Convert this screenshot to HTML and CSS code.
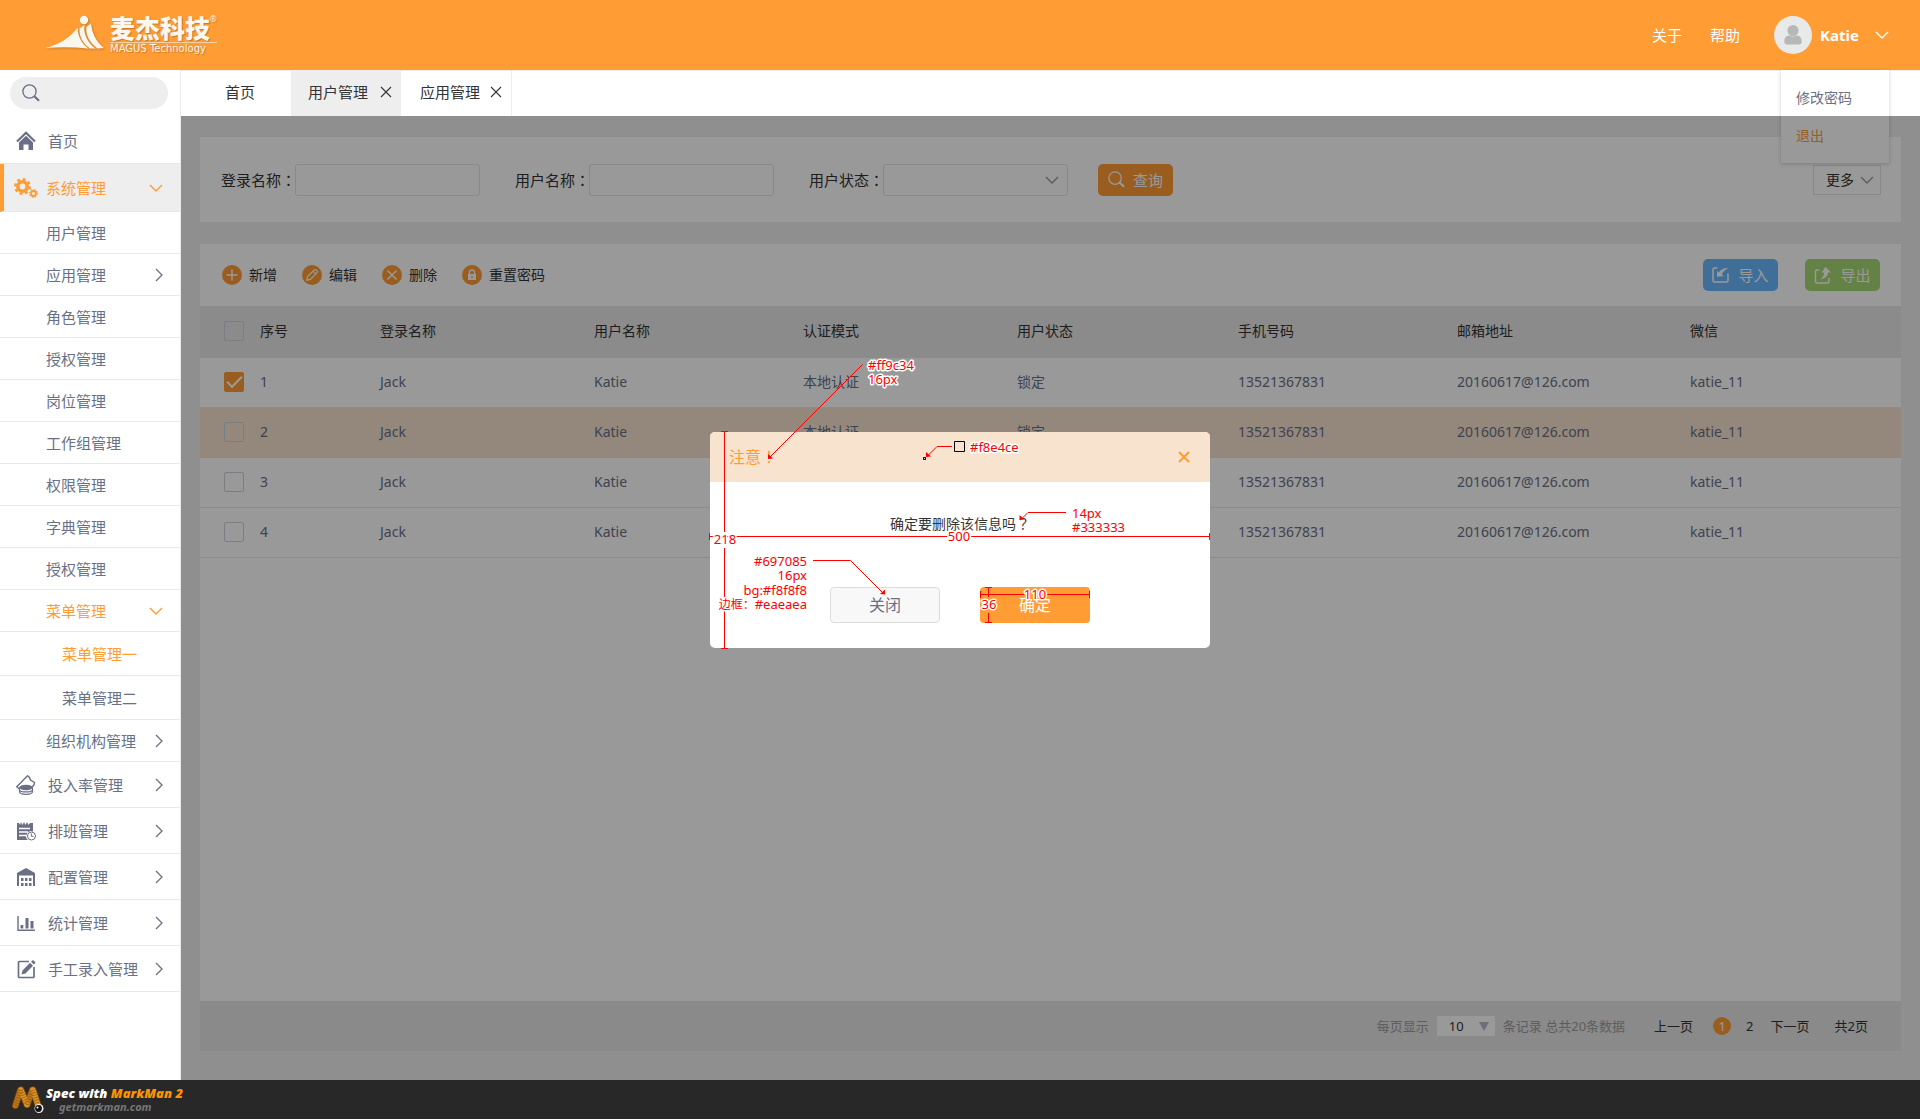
FILE: index.html
```html
<!DOCTYPE html>
<html lang="zh-CN">
<head>
<meta charset="utf-8">
<meta name="viewport" content="width=device-width, initial-scale=1">
<title>用户管理</title>
<link rel="stylesheet" href="styles.css">
</head>
<body>
<svg class="sprite" aria-hidden="true">
  <symbol id="i-right" viewBox="0 0 8 14"><path d="M1 1l6 6-6 6" fill="none" stroke="currentColor" stroke-width="1.3"/></symbol>
  <symbol id="i-down" viewBox="0 0 14 8"><path d="M1 1l6 6 6-6" fill="none" stroke="currentColor" stroke-width="1.4"/></symbol>
  <symbol id="i-x" viewBox="0 0 12 12"><path d="M1 1l10 10M11 1L1 11" fill="none" stroke="currentColor" stroke-width="1.1"/></symbol>
  <symbol id="i-search" viewBox="0 0 18 18"><circle cx="7.5" cy="7.5" r="6.6" fill="none" stroke="currentColor" stroke-width="1.3"/><path d="M12.3 12.3l4.7 4.5" stroke="currentColor" stroke-width="2.2"/></symbol>
</svg>

<div class="app">
  <header class="topbar">
    <a class="brand" href="#">
      <svg class="brand-mark" width="60" height="36" viewBox="0 0 60 36" aria-hidden="true">
        <circle cx="39" cy="5" r="4.2"/>
        <path d="M0 33C14 30 26 22 32.500 12.500C33 20 35.500 28 43.500 33.500Q22 31.500 0 33z"/>
        <path d="M39.500 10C38 17 42 28 50.500 33.500L45 33.500C37 28 34 20 34.500 13.500z"/>
        <path d="M46 8.500C47 18 51 27 59 33L52.500 33.500C44 27 40.500 19 41.500 12z"/>
      </svg>
      <span class="brand-text">
        <span class="brand-name">麦杰科技<sup>®</sup></span>
        <span class="brand-sub">MAGUS Technology</span>
      </span>
    </a>
    <nav class="topnav">
      <a href="#">关于</a>
      <a href="#">帮助</a>
      <div class="user">
        <button class="user-btn" type="button">
          <svg width="38" height="38" viewBox="0 0 38 38" aria-hidden="true"><circle cx="19" cy="19" r="19" fill="#e8eaea"/><circle cx="19" cy="14.500" r="5.500" fill="#b6b8b8"/><path d="M15 19.500h1q3 2 6 0h1c3.500.5 4.700 3 4.700 6 0 2-1 3-3 3H13.300c-2 0-3-1-3-3 0-3 1.200-5.500 4.700-6z" fill="#b6b8b8"/></svg>
          <span>Katie</span>
          <svg class="user-caret" width="14" height="8"><use href="#i-down"/></svg>
        </button>
        <div class="user-menu">
          <a href="#">修改密码</a>
          <a class="hot" href="#">退出</a>
        </div>
      </div>
    </nav>
  </header>

  <div class="body">
    <aside class="sidebar">
      <form class="side-search">
        <svg width="18" height="18"><use href="#i-search"/></svg>
        <input type="search" aria-label="搜索">
      </form>
      <nav class="menu">
        <a class="item" href="#">
          <svg width="20" height="20" viewBox="0 0 20 20"><path d="M1 10.500l9-8.700 9 8.700" fill="none" stroke="currentColor" stroke-width="2.200"/><path d="M3 11.500l7-6.700 7 6.700V19h-4.500v-5.500h-5V19H3z" fill="currentColor"/></svg>
          <span>首页</span></a>
        <a class="item active" href="#">
          <svg width="24" height="20" viewBox="0 0 24 20"><circle cx="8.500" cy="8.500" r="4.700" fill="none" stroke="currentColor" stroke-width="3.600"/><circle cx="8.500" cy="8.500" r="7.300" fill="none" stroke="currentColor" stroke-width="2.400" stroke-dasharray="3 2.730"/><circle cx="19.500" cy="15.500" r="2.500" fill="none" stroke="currentColor" stroke-width="1.800"/><circle cx="19.500" cy="15.500" r="3.800" fill="none" stroke="currentColor" stroke-width="1.300" stroke-dasharray="1.600 1.380"/></svg>
          <span>系统管理</span><svg class="caret" width="14" height="8"><use href="#i-down"/></svg></a>
        <a class="item sub" href="#"><span>用户管理</span></a>
        <a class="item sub" href="#"><span>应用管理</span><svg class="caret" width="8" height="14"><use href="#i-right"/></svg></a>
        <a class="item sub" href="#"><span>角色管理</span></a>
        <a class="item sub" href="#"><span>授权管理</span></a>
        <a class="item sub" href="#"><span>岗位管理</span></a>
        <a class="item sub" href="#"><span>工作组管理</span></a>
        <a class="item sub" href="#"><span>权限管理</span></a>
        <a class="item sub" href="#"><span>字典管理</span></a>
        <a class="item sub" href="#"><span>授权管理</span></a>
        <a class="item sub hot" href="#"><span>菜单管理</span><svg class="caret" width="14" height="8"><use href="#i-down"/></svg></a>
        <a class="item leaf hot" href="#"><span>菜单管理一</span></a>
        <a class="item leaf" href="#"><span>菜单管理二</span></a>
        <a class="item sub" href="#"><span>组织机构管理</span><svg class="caret" width="8" height="14"><use href="#i-right"/></svg></a>
        <a class="item" href="#">
          <svg width="20" height="20" viewBox="0 0 20 20"><path d="M3.500 14L.8 11.800 11.500.8l2 1.700 1 2.500 4 2.500-.3 2L16 12.500" fill="none" stroke="currentColor" stroke-width="1.400"/><ellipse cx="10" cy="12.500" rx="6.500" ry="2.700" fill="currentColor"/><path d="M3.500 12.500V16.500C3.500 20.300 16.500 20.300 16.500 16.500V12.500M3.500 14.500c0 3.300 13 3.300 13 0" fill="none" stroke="currentColor" stroke-width="1.200"/></svg>
          <span>投入率管理</span><svg class="caret" width="8" height="14"><use href="#i-right"/></svg></a>
        <a class="item" href="#">
          <svg width="20" height="20" viewBox="0 0 20 20"><path d="M1 2h2l1 2 1-3 1.500 3L8 1l1.500 3L11 1l1.500 3L14 2h3v8.500a5 5 0 0 0-5 8.500H1z" fill="currentColor"/><path d="M3 7.500h11M3 11h9M3 14.500h7" stroke="#fff" stroke-width="1.300"/><circle cx="15.500" cy="15" r="4" fill="#fff" stroke="currentColor" stroke-width="1"/><path d="M15.300 12.300v3h2.200" fill="none" stroke="currentColor" stroke-width="1"/></svg>
          <span>排班管理</span><svg class="caret" width="8" height="14"><use href="#i-right"/></svg></a>
        <a class="item" href="#">
          <svg width="20" height="20" viewBox="0 0 20 20"><path d="M1 6l9-5 9 5v13h-2V8.500H3V19H1z" fill="currentColor"/><path d="M5 11h2.500v3H5zM9 11h2.500v3H9zM13 11h2.500v3H13zM5 16h2.500v3H5zM9 16h2.500v3H9zM13 16h2.500v3H13z" fill="currentColor"/></svg>
          <span>配置管理</span><svg class="caret" width="8" height="14"><use href="#i-right"/></svg></a>
        <a class="item" href="#">
          <svg width="20" height="20" viewBox="0 0 20 20"><path d="M2 3v14.200h17" fill="none" stroke="currentColor" stroke-width="1.400"/><path d="M4.500 12h2.800v3.500H4.500zM9.500 5h3v10.500h-3zM14.500 8h3v7.500h-3z" fill="currentColor"/></svg>
          <span>统计管理</span><svg class="caret" width="8" height="14"><use href="#i-right"/></svg></a>
        <a class="item" href="#">
          <svg width="20" height="20" viewBox="0 0 20 20"><path d="M13 2.500H3.200q-.7 0-.7.700v14.600q0 .7.700.7h14.100q.7 0 .7-.7V8" fill="none" stroke="currentColor" stroke-width="1.700"/><path d="M5.500 15.500l1-4L14 3.800 17 6.800 9.500 14.500zM15 2.800L16.300 1.500q.7-.7 1.400 0l1.400 1.400q.7.700 0 1.300L17.900 5.600z" fill="currentColor"/></svg>
          <span>手工录入管理</span><svg class="caret" width="8" height="14"><use href="#i-right"/></svg></a>
      </nav>
    </aside>

    <main class="main">
      <nav class="tabs">
        <div class="tab home"><a href="#">首页</a></div>
        <div class="tab current"><a href="#">用户管理</a><button type="button" aria-label="关闭用户管理"><svg width="12" height="12"><use href="#i-x"/></svg></button></div>
        <div class="tab last"><a href="#">应用管理</a><button type="button" aria-label="关闭应用管理"><svg width="12" height="12"><use href="#i-x"/></svg></button></div>
      </nav>

      <div class="content">
        <form class="filters">
          <div class="field"><label for="f-login">登录名称<span class="mid" lang="zh-TW">：</span></label><input id="f-login" type="text"></div>
          <div class="field"><label for="f-user">用户名称<span class="mid" lang="zh-TW">：</span></label><input id="f-user" type="text"></div>
          <div class="field"><label for="f-state">用户状态<span class="mid" lang="zh-TW">：</span></label>
            <span class="select"><select id="f-state"><option></option><option>锁定</option></select><svg width="14" height="8"><use href="#i-down"/></svg></span></div>
          <button class="btn query" type="button"><svg width="17" height="17"><use href="#i-search"/></svg>查询</button>
          <button class="more" type="button">更多<svg width="14" height="8"><use href="#i-down"/></svg></button>
        </form>

        <section class="panel">
          <div class="toolbar">
            <button class="tool" type="button"><svg width="20" height="20" viewBox="0 0 20 20"><circle cx="10" cy="10" r="10" fill="#ff9c34"/><path d="M10 4.500v11M4.500 10h11" stroke="#fff" stroke-width="1.500"/></svg>新增</button>
            <button class="tool" type="button"><svg width="20" height="20" viewBox="0 0 20 20"><circle cx="10" cy="10" r="10" fill="#ff9c34"/><path d="M4.800 15.200l.8-3.600 6.600-6.600q1.100-.9 2.200.1l.6.600q.8 1 0 2L8.400 14.400zM11 6.200l2.800 2.800" fill="none" stroke="#fff" stroke-width="1.200"/></svg>编辑</button>
            <button class="tool" type="button"><svg width="20" height="20" viewBox="0 0 20 20"><circle cx="10" cy="10" r="10" fill="#ff9c34"/><path d="M5.500 5.500l9 9M14.500 5.500l-9 9" stroke="#fff" stroke-width="1.500"/></svg>删除</button>
            <button class="tool" type="button"><svg width="20" height="20" viewBox="0 0 20 20"><circle cx="10" cy="10" r="10" fill="#ff9c34"/><path d="M7.500 9.500V7.500a2.500 2.500 0 0 1 5 0v2" fill="none" stroke="#fff" stroke-width="1.400"/><rect x="6" y="9" width="8" height="6" fill="#fff"/><path d="M10 11v2" stroke="#ff9c34" stroke-width="1.200"/></svg>重置密码</button>
            <div class="transfer">
              <button class="btn import" type="button"><svg width="18" height="18" viewBox="0 0 18 18"><path d="M5.500 2H2.500Q1 2 1 3.500v11Q1 16 2.500 16h12q1.500 0 1.500-1.500V7.500" fill="none" stroke="currentColor" stroke-width="1.500"/><path d="M5 5l1.800 1.500Q10 1.500 16.500 2 11.500 4 9.700 8.500L12 10l-7 .8z" fill="currentColor"/></svg>导入</button>
              <button class="btn export" type="button"><svg width="18" height="18" viewBox="0 0 18 18"><path d="M5.500 4H3Q1.500 4 1.500 5.500v10Q1.500 17 3 17h10.500q1.500 0 1.500-1.500V12" fill="none" stroke="currentColor" stroke-width="1.500"/><path d="M11.500.8L17 6.500h-3Q14 12 6 13.500 10 11 10 6.500H7.500z" fill="currentColor"/></svg>导出</button>
            </div>
          </div>

          <table class="grid">
            <colgroup><col class="c-check"><col class="c-no"><col class="c-login"><col class="c-user"><col class="c-auth"><col class="c-state"><col class="c-phone"><col class="c-mail"><col class="c-wx"></colgroup>
            <thead><tr><th><input type="checkbox" aria-label="全选"></th><th>序号</th><th>登录名称</th><th>用户名称</th><th>认证模式</th><th>用户状态</th><th>手机号码</th><th>邮箱地址</th><th>微信</th></tr></thead>
            <tbody>
              <tr><td><input type="checkbox" checked aria-label="选择 1"></td><td>1</td><td>Jack</td><td>Katie</td><td>本地认证</td><td>锁定</td><td>13521367831</td><td>20160617@126.com</td><td>katie_11</td></tr>
              <tr class="hover"><td><input type="checkbox" aria-label="选择 2"></td><td>2</td><td>Jack</td><td>Katie</td><td>本地认证</td><td>锁定</td><td>13521367831</td><td>20160617@126.com</td><td>katie_11</td></tr>
              <tr><td><input type="checkbox" aria-label="选择 3"></td><td>3</td><td>Jack</td><td>Katie</td><td>本地认证</td><td>锁定</td><td>13521367831</td><td>20160617@126.com</td><td>katie_11</td></tr>
              <tr><td><input type="checkbox" aria-label="选择 4"></td><td>4</td><td>Jack</td><td>Katie</td><td>本地认证</td><td>锁定</td><td>13521367831</td><td>20160617@126.com</td><td>katie_11</td></tr>
            </tbody>
          </table>

          <div class="pager">
            <div class="page-size">
              <label for="size">每页显示</label>
              <span class="select"><select id="size"><option>10</option><option>20</option></select><svg width="10" height="9" viewBox="0 0 10 9"><path d="M0 0h10L5 9z" fill="currentColor"/></svg></span>
              <span>条记录 总共20条数据</span>
            </div>
            <a class="prev" href="#">上一页</a>
            <a class="page" href="#">1</a>
            <a class="num" href="#">2</a>
            <a class="next" href="#">下一页</a>
            <span>共2页</span>
          </div>
        </section>
        <div class="mask"></div>
      </div>
    </main>
  </div>

  <div class="dialog-layer">
    <div class="dialog" role="dialog" aria-labelledby="dlg-title">
      <div class="dialog-head"><h2 id="dlg-title">注意<span class="mid" lang="zh-TW">！</span></h2><button type="button" aria-label="关闭"><svg width="12" height="12" viewBox="0 0 12 12"><path d="M1 1l10 10M11 1L1 11" stroke="currentColor" stroke-width="2"/></svg></button></div>
      <p>确定要删除该信息吗<span class="mid" lang="zh-TW">？</span></p>
      <div class="dialog-actions"><button class="cancel" type="button">关闭</button><button class="ok" type="button">确定</button></div>
      <svg class="notes" viewBox="710 432 500 216">
        <g class="lines">
          <path d="M862.500 364.500L770 457M724.500 431.500V532M724.500 548V648.500M721 431.500h7M721 648.500h7"/>
          <path d="M709.500 536.500H947M971 536.500H1209.500M709.500 533v7M1209.500 533v7"/>
          <path d="M952 446.500H937L928 455.500M1066 512.500H1028L1022 518.500M813 560.500H850.500L883 593"/>
          <path d="M980.500 594.500H1024M1046 594.500H1089.500M980.500 591v7M1089.500 591v7M988.500 587.500V597M988.500 613V622.500M985 587.500h7M985 622.500h7"/>
        </g>
        <path class="heads" d="M768 459v-5l5 4.500zM926 457v-5l5 4.500zM1019.500 520v-5l5 4.500zM885 594.500v-5l-5 4.500z"/>
        <path class="swatch" d="M954.500 441.500h10v10h-10zM923.500 457.500h2v2h-2z"/>
        <text x="868" y="370">#ff9c34</text><text x="868" y="384">16px</text>
        <text x="970" y="452">#f8e4ce</text>
        <text x="1072" y="518">14px</text><text x="1072" y="532">#333333</text>
        <g text-anchor="end"><text x="807" y="566">#697085</text><text x="807" y="580">16px</text><text x="807" y="595">bg:#f8f8f8</text><text x="807" y="609"><tspan class="small">边框：</tspan>#eaeaea</text></g>
        <g text-anchor="middle"><text x="725" y="544">218</text><text x="959" y="541">500</text><text x="1035" y="599">110</text><text x="989" y="609">36</text></g>
      </svg>
    </div>
  </div>
</div>

<footer class="credit">
  <svg width="32" height="30" viewBox="0 0 32 30" aria-hidden="true">
    <g fill="none" stroke-linecap="round"><path d="M3.500 20.500L8.500 5M9 5l6 14.500M15 19.500L20.500 5M21 5l6 18" stroke="#7a450c" stroke-width="7"/><path d="M3.500 20.500L8.500 5M15 19.500L20.500 5" stroke="#b8741a" stroke-width="5.500"/><path d="M9 5l6 14.500M21 5l6 18" stroke="#dc9224" stroke-width="5.500"/><path d="M3.500 20.500L8.500 5M9 5l6 14.500M15 19.500L20.500 5M21 5l6 18" stroke="#8f540f" stroke-width="5" stroke-linecap="butt" stroke-dasharray=".6 2"/></g>
    <circle cx="27" cy="23.500" r="4.500" fill="#eee"/><circle cx="26.500" cy="23.500" r="3.400" fill="#111"/><circle cx="25.500" cy="22.500" r="1" fill="#fff"/>
  </svg>
  <div class="credit-text"><strong>Spec with <a href="#">MarkMan 2</a></strong><span>getmarkman.com</span></div>
</footer>
</body>
</html>
```
FILE: styles.css
```css
* { box-sizing: border-box; }

:root {
  --orange: #ff9c34;
  --slate: #697085;
  --ink: #333;
  --line: #e6e8f0;
}

body {
  margin: 0;
  min-height: 100vh;
  display: flex;
  flex-direction: column;
  font: 15px/20px "Noto Sans", "Noto Sans CJK SC", sans-serif;
  color: var(--ink);
  background: #fff;
}

a { color: inherit; text-decoration: none; }
button { font: inherit; color: inherit; border: 0; padding: 0; background: none; cursor: pointer; }
input, select { font: inherit; color: inherit; }
svg { display: block; flex: none; }
.sprite { position: absolute; width: 0; height: 0; }

/* full-width punctuation centred in its cell */
.mid { font-family: "Noto Sans CJK TC", sans-serif; line-height: 0; }

.app { flex: 1; display: flex; flex-direction: column; position: relative; }

/* top bar */
.topbar {
  height: 70px;
  padding: 0 31px 0 45px;
  display: flex;
  align-items: center;
  justify-content: space-between;
  background: var(--orange);
  color: #fff;
}
.brand { display: flex; gap: 5px; color: #fbf6ee; }
.brand-mark { fill: currentColor; filter: drop-shadow(1px 1px 1px #c77a28); }
.brand-text { display: flex; flex-direction: column; text-shadow: 1px 1px 1px #c77a28; }
.brand-name { font-size: 25px; line-height: 27px; font-weight: 900; border-bottom: 1px solid #fbd3a2; display: flex; }
.brand-name sup { font-size: 8px; line-height: 8px; font-weight: 400; }
.brand-sub { font: 10px/12px "DejaVu Sans", sans-serif; }
.topnav { display: flex; align-items: center; gap: 28px; }
.user { position: relative; align-self: stretch; padding-left: 6px; }
.user-btn { display: flex; align-items: center; gap: 8px; font-weight: 700; }
.user-caret { margin-left: 8px; }
.user-menu {
  position: absolute;
  z-index: 1;
  top: 54px;
  right: 0;
  width: 108px;
  padding: 9px 0 8px 15px;
  background: #fff;
  box-shadow: 0 1px 4px rgba(0, 0, 0, .2);
  color: var(--slate);
  font-size: 14px;
  line-height: 38px;
}
.user-menu a { display: block; }
.hot { color: var(--orange); }

/* sidebar */
.body { flex: 1; display: flex; }
.sidebar { width: 181px; border-right: 1px solid #e9e9e9; background: #fff; }
.side-search {
  height: 32px;
  margin: 7px 12px 9px 10px;
  padding: 0 12px;
  display: flex;
  align-items: center;
  gap: 8px;
  border-radius: 16px;
  background: #eee;
  color: var(--slate);
}
.side-search input { min-width: 0; flex: 1; border: 0; outline: 0; background: none; appearance: none; }
.item {
  height: 46px;
  padding: 0 17px 0 16px;
  display: flex;
  align-items: center;
  gap: 12px;
  border-bottom: 1px solid var(--line);
  color: var(--slate);
}
.item .caret { margin-left: auto; }
.item.active { height: 48px; padding-left: 10px; gap: 8px; border-left: 4px solid var(--orange); background: #eee; color: var(--orange); }
.item.sub { height: 42px; padding-left: 46px; }
.item.leaf { height: 44px; padding-left: 62px; }
.item.hot { color: var(--orange); }

/* tabs */
.main { flex: 1; min-width: 0; display: flex; flex-direction: column; }
.tabs { height: 46px; display: flex; border-top: 1px solid #eee; background: #fff; }
.tab { width: 110px; padding: 0 9px 3px 17px; display: flex; align-items: center; justify-content: space-between; }
.tab.home { justify-content: center; }
.tab.current { background: #eee; }
.tab.last { width: 111px; padding-left: 19px; border-right: 1px solid #eee; }

/* content */
.content { flex: 1; position: relative; padding: 21px 19px 29px; display: flex; flex-direction: column; gap: 22px; background: #eee; }
.mask { position: absolute; z-index: 2; inset: 0; background: rgba(0, 0, 0, .4); }
.filters { height: 85px; padding: 0 20px 0 21px; display: flex; align-items: center; gap: 35px; background: #fff; }
.field { display: flex; align-items: center; }
.field label { width: 74px; white-space: nowrap; }
.field input, .field select { width: 185px; height: 32px; padding: 0 10px; border: 1px solid #e4e4e4; border-radius: 3px; background: #fff; appearance: none; }
.select { position: relative; display: block; }
.select svg { position: absolute; right: 9px; top: 12px; color: #999; pointer-events: none; }
.btn { width: 75px; height: 32px; display: flex; align-items: center; justify-content: center; gap: 8px; border-radius: 5px; color: #fff; }
.query { margin-left: -5px; background: var(--orange); }
.more { width: 68px; height: 30px; margin-left: auto; padding-left: 6px; display: flex; align-items: center; justify-content: center; gap: 6px; border: 1px solid #e4e4e4; font-size: 14px; }
.more svg { color: #999; }

.panel { flex: 1; display: flex; flex-direction: column; background: #fff; }
.toolbar { height: 62px; padding: 0 21px 0 22px; display: flex; align-items: center; gap: 25px; font-size: 14px; }
.tool { display: flex; align-items: center; gap: 7px; }
.transfer { margin-left: auto; display: flex; gap: 27px; font-size: 15px; }
.import { background: #6ab9ff; }
.export { background: #a7d973; }

.grid { width: 100%; table-layout: fixed; border-collapse: collapse; font-size: 14px; text-align: left; }
.grid th, .grid td { height: 50px; padding: 0; border-bottom: 1px solid #e8e8e8; }
.grid th { height: 51px; font-weight: 400; background: #e8e8e8; }
.grid td { color: var(--slate); }
.grid th:first-child, .grid td:first-child { padding-left: 24px; }
.grid .hover td { background: #f6e3cd; border-color: #f6e3cd; }
.grid input {
  width: 20px;
  height: 20px;
  margin: 0;
  display: grid;
  place-items: center;
  appearance: none;
  border: 1px solid #cdd0dc;
  border-radius: 2px;
}
.grid input:checked { border-color: var(--orange); background: var(--orange); }
.grid input:checked::after { content: ""; width: 13px; height: 6px; margin-bottom: 4px; border: solid #fff; border-width: 0 0 2px 2px; transform: rotate(-45deg); }
.c-check { width: 60px; }
.c-no { width: 120px; }
.c-login { width: 214px; }
.c-user { width: 209px; }
.c-auth { width: 214px; }
.c-state { width: 221px; }
.c-phone { width: 219px; }
.c-mail { width: 233px; }
.c-wx { width: 211px; }

.pager { height: 50px; margin-top: auto; padding: 0 33px 0 0; display: flex; align-items: center; justify-content: flex-end; background: #e6e6e6; font-size: 13px; }
.page-size { display: flex; align-items: center; gap: 8px; margin-right: 29px; color: #9c9c9c; }
.page-size select { width: 58px; height: 20px; padding: 0 12px; border: 0; background: #fff; color: var(--ink); appearance: none; }
.page-size .select svg { right: 6px; top: 6px; color: #b4b8cc; }
.page { width: 18px; margin: 0 15px 0 20px; border-radius: 9px; line-height: 18px; text-align: center; background: var(--orange); color: #fff; }
.next { margin: 0 25px 0 17px; }

/* dialog */
.dialog-layer { position: absolute; z-index: 3; inset: 0; display: flex; align-items: center; justify-content: center; pointer-events: none; }
.dialog { position: relative; width: 500px; padding-bottom: 25px; border-radius: 5px; background: #fff; pointer-events: auto; }
.dialog-head { height: 50px; padding: 0 20px 0 19px; display: flex; align-items: center; justify-content: space-between; border-radius: 5px 5px 0 0; background: #f8e4ce; color: var(--orange); }
.dialog h2 { margin: 0; font-size: 16px; line-height: 20px; font-weight: 400; }
.dialog p { margin: 32px 0 53px; font-size: 14px; text-align: center; }
.dialog-actions { display: flex; justify-content: center; gap: 40px; font-size: 16px; }
.dialog-actions button { width: 110px; height: 36px; border-radius: 4px; }
.cancel { border: 1px solid #dcdcdc; background: #f8f8f8; color: var(--slate); }
.ok { background: var(--orange); color: #fff; }
.notes { position: absolute; inset: 0; width: 100%; height: 100%; overflow: visible; pointer-events: none; font-size: 13px; fill: #f00; }
.notes text { paint-order: stroke; stroke: #fff; stroke-width: 3px; stroke-linejoin: round; }
.notes .small { font-size: 12px; }
.lines { fill: none; stroke: #f00; }
.swatch { fill: none; stroke: #000; }

/* credit strip */
.credit { height: 39px; padding-left: 12px; display: flex; align-items: center; gap: 2px; background: #282828; color: #fff; font-style: italic; font-weight: 700; }
.credit-text { display: flex; flex-direction: column; font-size: 13px; line-height: 13px; }
.credit-text a { color: #ff9200; }
.credit-text span { padding-left: 13px; font-size: 11px; color: #777; }
```
